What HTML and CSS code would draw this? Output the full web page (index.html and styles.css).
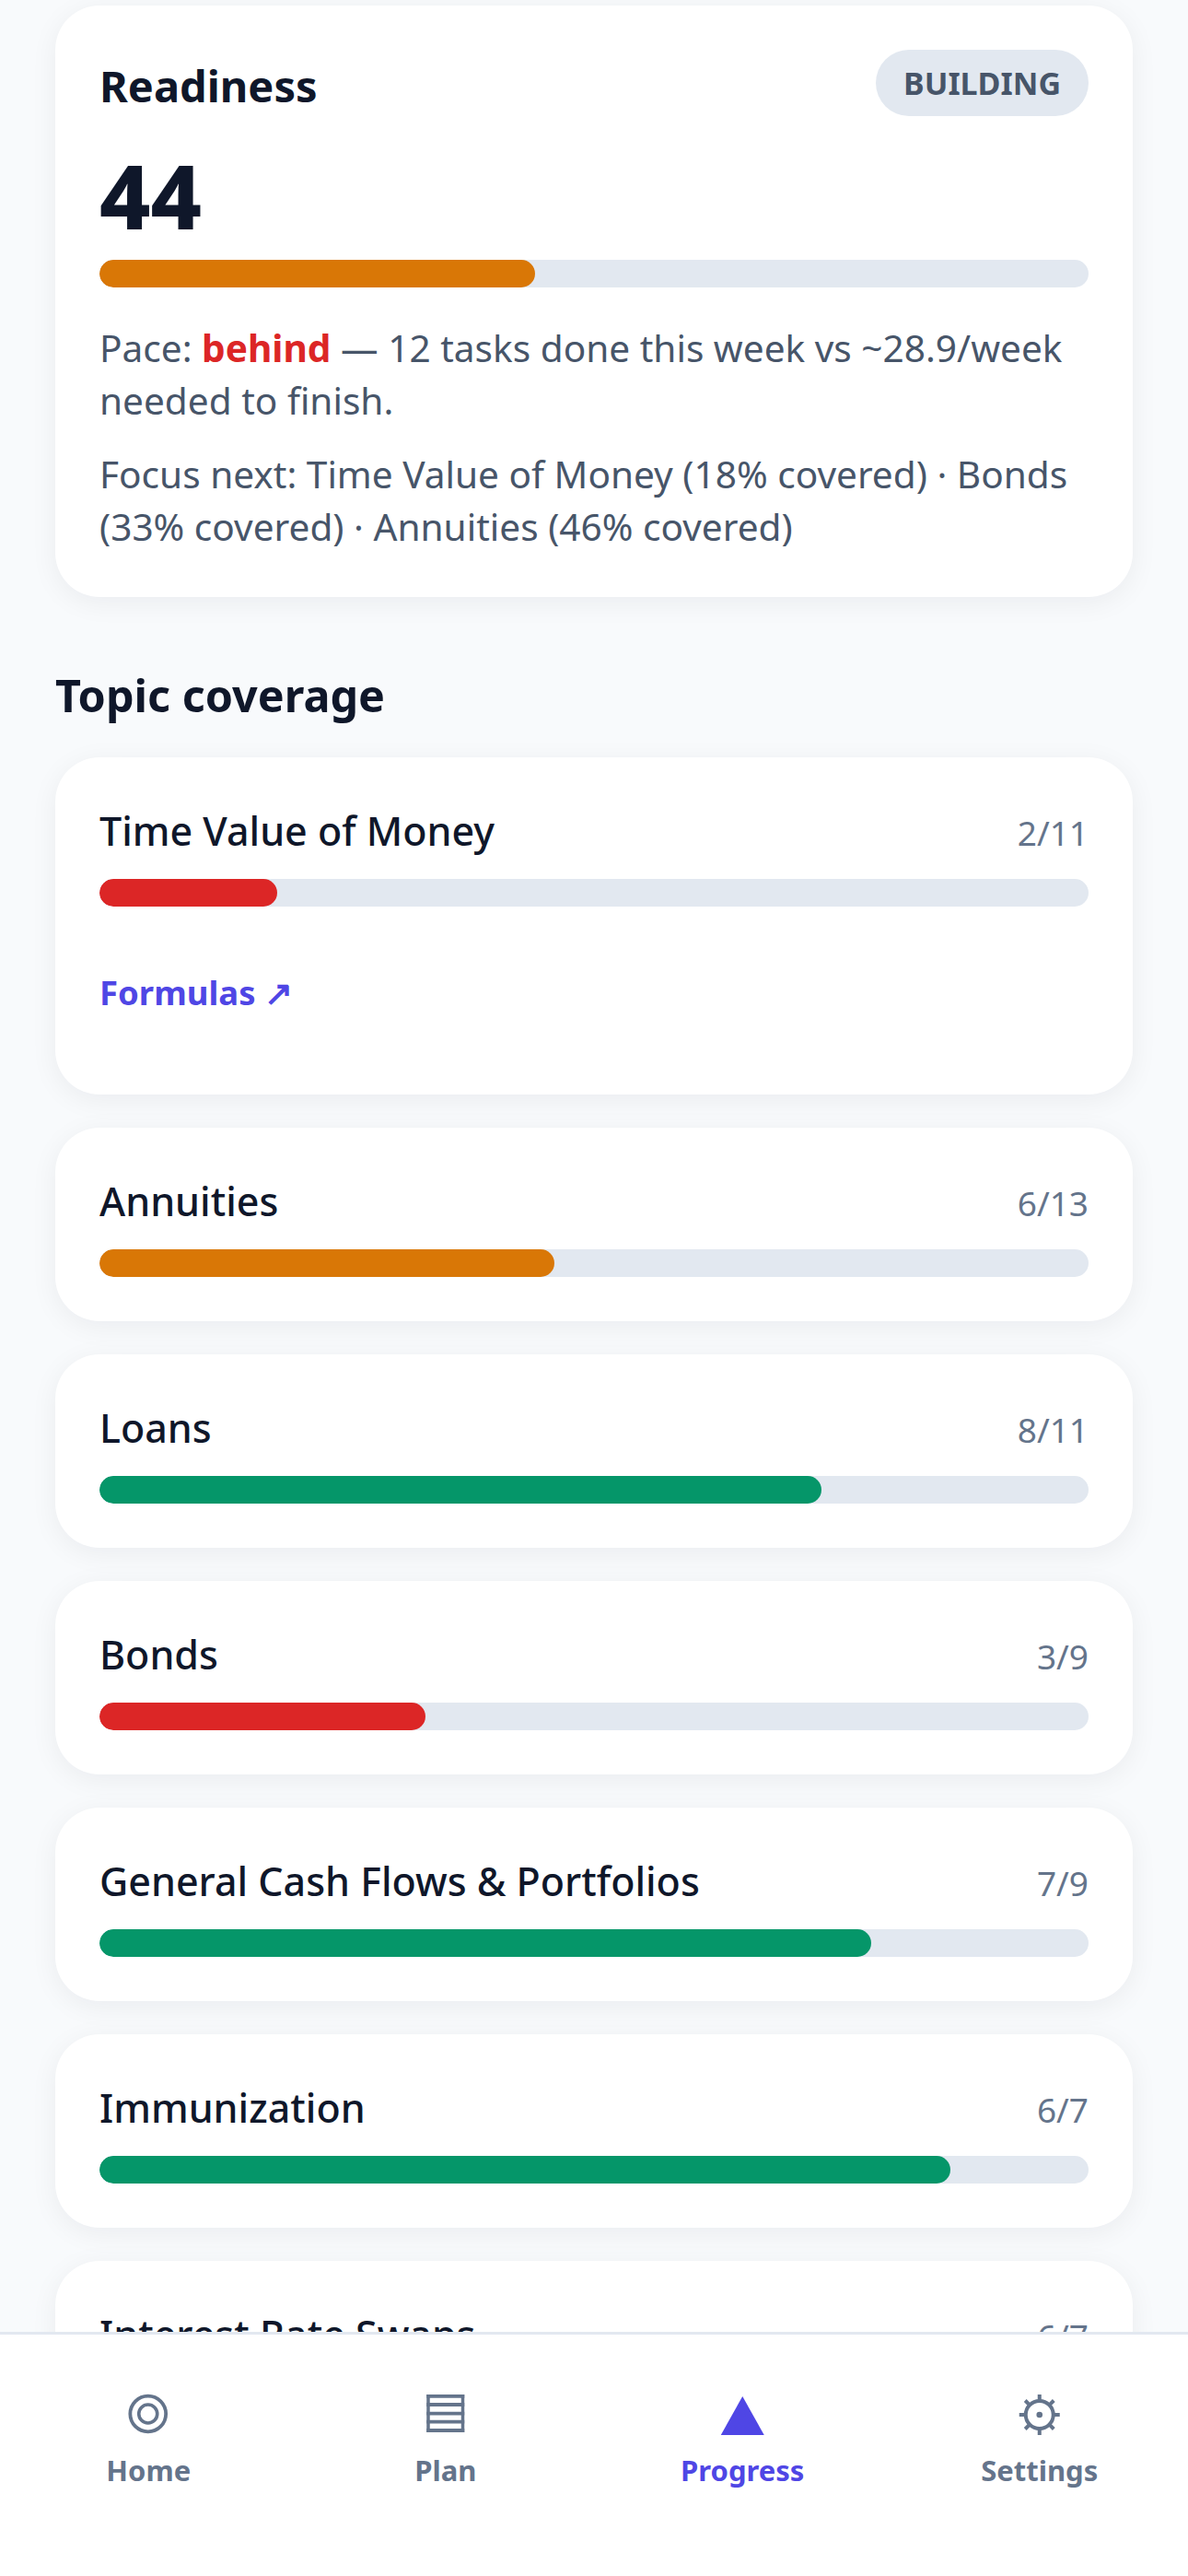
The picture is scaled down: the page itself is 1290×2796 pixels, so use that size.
FILE: index.html
```html
<!DOCTYPE html>
<html lang="en">
<head>
  <meta charset="UTF-8">
  <title>Progress</title>
  <link rel="stylesheet" href="styles.css">
</head>
<body>
  <main class="content">
    <section class="card readiness">
      <div class="readiness-head">
        <h2>Readiness</h2>
        <span class="badge">BUILDING</span>
      </div>
      <div class="score">44</div>
      <div class="bar"><div class="fill orange" style="width: 44%"></div></div>
      <p class="note pace">Pace: <strong>behind</strong> — 12 tasks done this week vs ~28.9/week needed to finish.</p>
      <p class="note">Focus next: Time Value of Money (18% covered) · Bonds (33% covered) · Annuities (46% covered)</p>
    </section>

    <h2 class="section-title">Topic coverage</h2>

    <section class="card topic">
      <div class="topic-head"><span class="topic-name">Time Value of Money</span><span class="count">2/11</span></div>
      <div class="bar"><div class="fill red" style="width: 18%"></div></div>
      <a class="link" href="#">Formulas ↗</a>
    </section>
    <section class="card topic">
      <div class="topic-head"><span class="topic-name">Annuities</span><span class="count">6/13</span></div>
      <div class="bar"><div class="fill orange" style="width: 46%"></div></div>
    </section>
    <section class="card topic">
      <div class="topic-head"><span class="topic-name">Loans</span><span class="count">8/11</span></div>
      <div class="bar"><div class="fill green" style="width: 73%"></div></div>
    </section>
    <section class="card topic">
      <div class="topic-head"><span class="topic-name">Bonds</span><span class="count">3/9</span></div>
      <div class="bar"><div class="fill red" style="width: 33%"></div></div>
    </section>
    <section class="card topic">
      <div class="topic-head"><span class="topic-name">General Cash Flows &amp; Portfolios</span><span class="count">7/9</span></div>
      <div class="bar"><div class="fill green" style="width: 78%"></div></div>
    </section>
    <section class="card topic">
      <div class="topic-head"><span class="topic-name">Immunization</span><span class="count">6/7</span></div>
      <div class="bar"><div class="fill green" style="width: 86%"></div></div>
    </section>
    <section class="card topic">
      <div class="topic-head"><span class="topic-name">Interest Rate Swaps</span><span class="count">6/7</span></div>
      <div class="bar"><div class="fill green" style="width: 86%"></div></div>
    </section>
  </main>

  <nav class="tabs">
    <a class="tab" href="#">
      <svg class="tab-icon" viewBox="0 0 48 48"><circle cx="23.75" cy="23" r="19.4" fill="none" stroke="currentColor" stroke-width="3.8"/><circle cx="23.75" cy="23" r="10" fill="none" stroke="currentColor" stroke-width="3.6"/></svg>
      <span>Home</span>
    </a>
    <a class="tab" href="#">
      <svg class="tab-icon" viewBox="0 0 48 48"><path d="M3.250 3.800H44.250M3.250 13H44.250M3.250 22.700H44.250M3.250 31.700H44.250M3.250 41H44.250" fill="none" stroke="currentColor" stroke-width="3.800"/><path d="M5 2V43M42.500 2V43" fill="none" stroke="currentColor" stroke-width="3.500"/></svg>
      <span>Plan</span>
    </a>
    <a class="tab active" href="#">
      <svg class="tab-icon" viewBox="0 0 48 48"><polygon points="24.250,4 47.750,46 0.750,46" fill="currentColor"/></svg>
      <span>Progress</span>
    </a>
    <a class="tab" href="#">
      <svg class="tab-icon" viewBox="0 0 48 48"><circle cx="23.750" cy="24" r="15" fill="none" stroke="currentColor" stroke-width="4"/><circle cx="23.750" cy="24" r="3.300" fill="currentColor"/><path d="M23.750 2V9M23.750 39V46M1.750 24H8.750M38.750 24H45.750M8.200 8.500L13 13.300M34.500 34.700L39.300 39.500M39.300 8.500L34.500 13.300M13 34.700L8.200 39.500" fill="none" stroke="currentColor" stroke-width="4"/></svg>
      <span>Settings</span>
    </a>
  </nav>
</body>
</html>
```

FILE: styles.css
```css
* { box-sizing: border-box; }
html, body { margin: 0; height: 100%; }
body {
  display: flex;
  flex-direction: column;
  height: 2796px;
  overflow: hidden;
  background: #f8fafc;
  color: #0f172a;
  font-family: "Noto Sans", "Open Sans", sans-serif;
}
h2, p { margin: 0; }

.content { flex: 1; min-height: 0; overflow: hidden; padding: 6px 60px 0; }

.card {
  background: #fff;
  border-radius: 48px;
  padding: 48px;
  box-shadow: 0 6px 30px rgba(15, 23, 42, 0.06);
}

.readiness { height: 642px; }
.readiness-head { display: flex; justify-content: space-between; align-items: flex-start; height: 48px; }
.readiness-head h2 { font-size: 47px; line-height: 78px; font-weight: 700; }
.badge {
  background: #e2e8f0;
  color: #475569;
  border-radius: 36px;
  height: 72px;
  padding: 0 30px;
  font-size: 34px;
  font-weight: 700;
  line-height: 72px;
}
.score { font-size: 96px; font-weight: 800; line-height: 96px; margin: 62px 0 22px; }

.bar { height: 30px; border-radius: 15px; background: #e2e8f0; overflow: hidden; }
.fill { height: 100%; border-radius: 15px; }
.orange { background: #d97706; }
.red { background: #dc2626; }
.green { background: #059669; }

.note { color: #475569; font-size: 40.6px; line-height: 57px; margin-top: 23px; }
.pace { margin-top: 37px; }
.pace strong { color: #dc2626; font-weight: 700; }

.section-title { font-size: 48.5px; font-weight: 700; line-height: 66px; margin: 73px 0 35px; }

.topic { margin-bottom: 36px; }
.topic-head { display: flex; justify-content: space-between; align-items: baseline; height: 84px; line-height: 64px; }
.topic-name { font-size: 43px; font-weight: 500; }
.count { color: #64748b; font-size: 37px; }

.link { display: block; color: #4f46e5; font-size: 36.5px; font-weight: 700; text-decoration: none; line-height: 54px; margin-top: 66px; height: 90px; }

.tabs {
  flex: none;
  height: 265px;
  display: grid;
  grid-template-columns: repeat(4, 1fr);
  align-items: start;
  padding: 63px 0 0;
  background: #fff;
  border-top: 3px solid #e2e8f0;
}
.tab { display: flex; flex-direction: column; align-items: center; gap: 14px; color: #64748b; text-decoration: none; font-size: 31px; font-weight: 700; line-height: 45px; }
.tab.active { color: #4f46e5; }
.tab-icon { width: 48px; height: 48px; display: block; }
```
